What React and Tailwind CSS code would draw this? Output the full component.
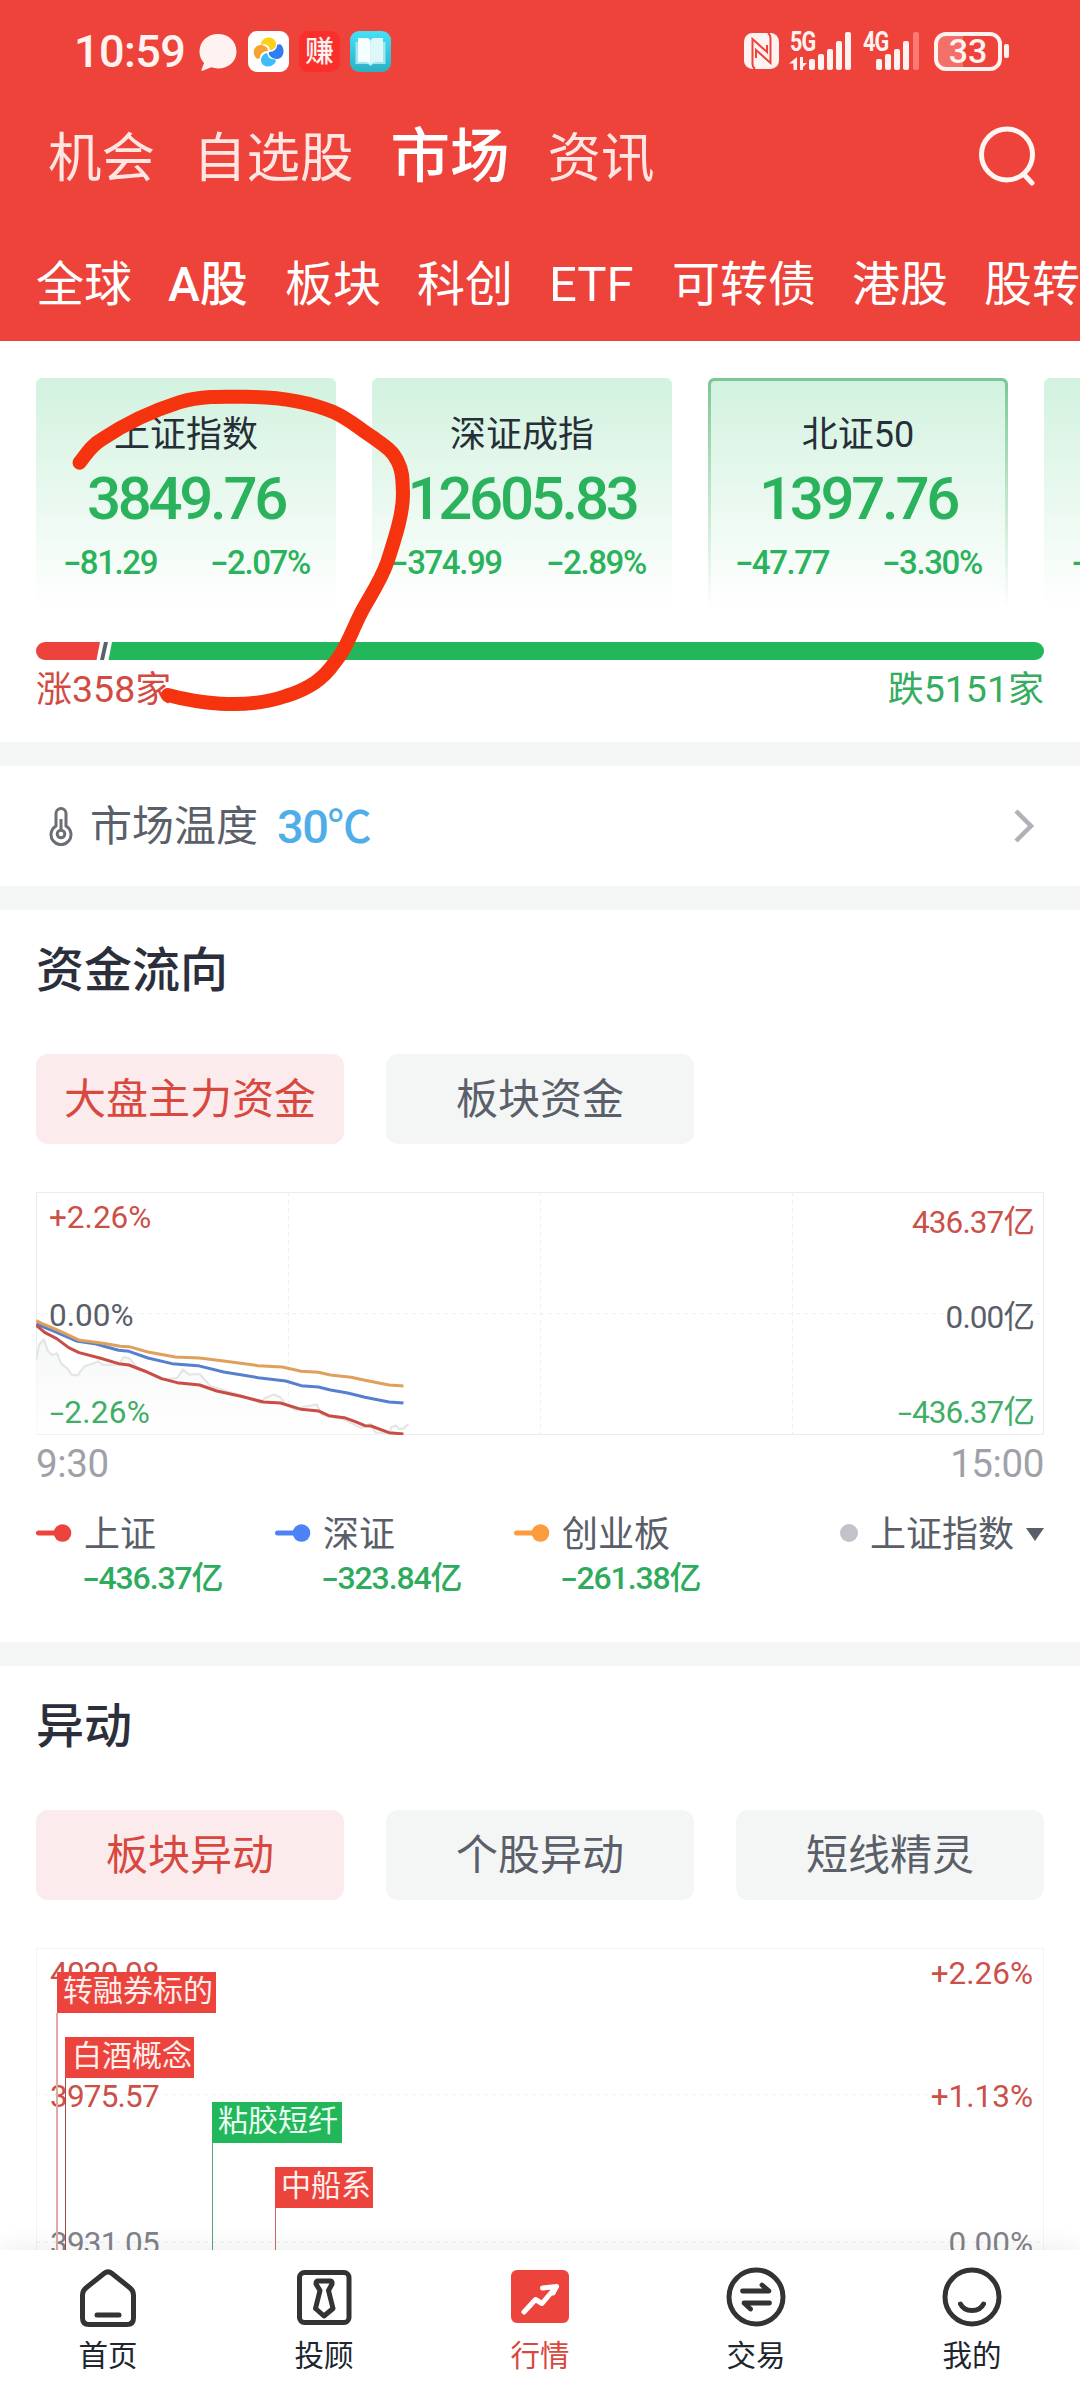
import React from "react";

const CARDS = [
  { name: "上证指数", value: "3849.76", diff: "-81.29", pct: "-2.07%" },
  { name: "深证成指", value: "12605.83", diff: "-374.99", pct: "-2.89%" },
  { name: "北证50", value: "1397.76", diff: "-47.77", pct: "-3.30%", active: true },
  { name: "\u00a0", value: "\u00a0", diff: "-34.52", pct: "\u00a0" },
];

// Number whose leading minus is drawn wide, level with the digits.
function Signed({ children }) {
  const text = String(children);
  if (text[0] !== "-") return <span>{text}</span>;
  return (
    <span className="whitespace-nowrap">
      <span className="inline-block w-[0.45em] scale-x-[1.6] text-center tracking-normal">-</span>
      {text.slice(1)}
    </span>
  );
}

function StatusBar() {
  return (
    <div className="flex h-[102px] items-center pl-[74px] pr-[71px] text-[#fff3f1]">
      <span className="w-[123px] text-[45px] font-medium leading-none tracking-[-0.6px]">10:59</span>
      <svg className="mt-px h-[42px] w-[42px]" viewBox="0 0 42 42" fill="none">
        <path d="M21 3C10.500 3 2.500 10.500 2.500 20.500c0 5 1.800 8.600 4.600 11.400L4.500 38.500c-.3 1 .4 1.600 1.300 1.200l8.400-3.400c2.100.7 4.400 1.100 6.800 1.100 10.500 0 18.500-7 18.500-17S31.500 3 21 3z" fill="#fff3f1" />
      </svg>
      <svg className="ml-[9px] h-[41px] w-[41px]" viewBox="0 0 41 41">
        <rect width="41" height="41" rx="9" fill="#fff" />
        <path d="M14 10c4-6 14-4 14 3 0 4-3 6-6 6-1-5-4-7-9-5 0-2 0-3 1-4z" fill="#fcd116" />
        <path d="M34 15c4 6 0 14-6 13-5-1-8-4-7-7 5 0 8-3 8-7 2-1 4-1 5 1z" fill="#2f7df0" />
        <path d="M27 32c-5 6-14 4-14-3 0-3 2-6 6-7 1 5 4 7 8 6 1 1 1 3 0 4z" fill="#3cbcf8" />
        <path d="M8 27c-5-6-1-14 6-13 4 1 6 3 6 6-5 0-8 3-8 7-1 1-3 1-4 0z" fill="#f7a233" />
      </svg>
      <div className="ml-[10px] flex h-[41px] w-[41px] items-center justify-center rounded-[9px] bg-[#f92f2b] pt-[3px] text-[29px] font-medium leading-none text-[#fff3f1]">
        赚
      </div>
      <svg className="ml-[10px] h-[41px] w-[41px]" viewBox="0 0 41 41">
        <defs>
          <linearGradient id="book" x1="0" y1="0" x2="0" y2="1">
            <stop offset="0" stopColor="#45e0f8" />
            <stop offset="1" stopColor="#2cb0c4" />
          </linearGradient>
        </defs>
        <rect width="41" height="41" rx="9" fill="url(#book)" />
        <path d="M5.500 11v22H18l2.500 2 2.500-2h12.500V11z" fill="#9fe6ee" />
        <path d="M8 7h9c2 0 3.500 1.500 3.500 3.500V34c-1-2-3-3-5-3H8z" fill="#f4ffff" />
        <path d="M33 7h-9c-2 0-3.500 1.500-3.500 3.500V34c1-2 3-3 5-3H33z" fill="#e0f7fa" />
      </svg>
      <div className="ml-auto flex items-center">
        <svg className="h-[36px] w-[35px]" viewBox="0 0 35 36">
          <rect width="35" height="36" rx="8.500" fill="#fff3f1" />
          <path d="M11 36C9 34.500 8.500 33 8.500 31V6L23 19V12" fill="none" stroke="#ee433b" strokeWidth="2" />
          <path d="M24 0C26 1.500 26.500 3 26.500 5V30L12 17V25" fill="none" stroke="#ee433b" strokeWidth="2" />
        </svg>
        <div className="relative ml-[11px] h-[38px] w-[62px]">
          <span className="absolute left-0 top-[-3px] origin-left scale-x-[0.8] text-[27px] font-bold leading-none tracking-[-1px]">5G</span>
          <svg className="absolute inset-0 h-[38px] w-[62px] overflow-visible" viewBox="0 0 62 38" fill="#fff3f1">
            <path d="M7 25v13H3.500v-6.500H-1zM10 25v13h3v-3l4-4h-4v-6z" />
            <rect x="19" y="27" width="6" height="11" rx="2" />
            <rect x="28" y="22" width="6" height="16" rx="2" />
            <rect x="37" y="17" width="6" height="21" rx="2" />
            <rect x="46" y="9" width="6" height="29" rx="2" />
            <rect x="55" y="0" width="6" height="38" rx="2" />
          </svg>
        </div>
        <div className="relative ml-[11px] h-[38px] w-[57px]">
          <span className="absolute left-0 top-[-3px] origin-left scale-x-[0.8] text-[27px] font-bold leading-none tracking-[-1px]">4G</span>
          <svg className="absolute inset-0 h-[38px] w-[57px]" viewBox="0 0 57 38" fill="#fff3f1">
            <rect x="13" y="27" width="6" height="11" rx="2" />
            <rect x="22" y="22" width="6" height="16" rx="2" />
            <rect x="31" y="17" width="6" height="21" rx="2" />
            <rect x="40" y="9" width="6" height="29" rx="2" />
            <rect x="50" y="0" width="6" height="38" rx="2" fill="#fb7a72" />
          </svg>
        </div>
        <div className="ml-[14px] flex h-[39px] w-[68px] items-center justify-center rounded-[12px] border-[4px] border-[#fff3f1] bg-[linear-gradient(90deg,#f37068_42%,transparent_42%)] text-[34px] font-medium leading-none">
          33
        </div>
        <div className="ml-[2px] h-[14px] w-[5px] rounded-[2px] bg-[#fff3f1]" />
      </div>
    </div>
  );
}

function Header() {
  return (
    <header className="h-[341px] shrink-0 bg-[#ed433a] text-white">
      <StatusBar />
      <div className="flex h-[106px] items-center pl-[48px] pr-[44px] text-[53.500px] leading-none text-[#ffe6e3]">
        <span className="pt-[7px]">机会</span>
        <span className="ml-[38px] pt-[7px]">自选股</span>
        <span className="ml-[37px] pt-[5px] text-[59.500px] font-medium text-white">市场</span>
        <span className="ml-[38px] pt-[7px]">资讯</span>
        <svg className="ml-auto h-[62px] w-[60px]" viewBox="0 0 60 62" fill="none" stroke="#fff5f3" strokeWidth="5" strokeLinecap="round">
          <circle cx="31" cy="30.500" r="25.500" />
          <path d="M48 50.500l8 8.500" />
        </svg>
      </div>
      <div className="flex h-[133px] items-center overflow-hidden whitespace-nowrap pl-[36px] pt-[20px] text-[48px] leading-none">
        <span className="w-[132px]">全球</span>
        <span className="w-[117px] font-medium">A股</span>
        <span className="w-[132px]">板块</span>
        <span className="w-[131px]">科创</span>
        <span className="w-[124px] pl-px text-[49px]">ETF</span>
        <span className="w-[180px]">可转债</span>
        <span className="w-[132px]">港股</span>
        <span className="w-[96px]">股转</span>
      </div>
    </header>
  );
}

function IndexCard({ name, value, diff, pct, active }) {
  return (
    <div className="relative h-[231px] w-[300px] shrink-0">
      {active && (
        <div className="absolute inset-0 rounded-t-[6px] bg-linear-to-b from-[#79c795] to-white" />
      )}
      <div
        className={
          "absolute bg-linear-to-b from-[#d2f2df] to-white " +
          (active ? "inset-x-[3px] bottom-0 top-[3px] rounded-t-[4px]" : "inset-0 rounded-t-[6px]")
        }
      />
      <div className="relative flex h-full flex-col items-center leading-none text-[#2bb25c]">
        <span className="mt-[39px] text-[36px] text-[#262f38]">{name}</span>
        <span className="mt-[16px] text-[60px] font-medium tracking-[-3.300px]">{value}</span>
        <div className="mt-[17px] grid w-full grid-cols-2 text-center text-[33px] font-medium tracking-[-1.400px]">
          <Signed>{diff}</Signed>
          <Signed>{pct}</Signed>
        </div>
      </div>
    </div>
  );
}

function Scribble() {
  return (
    <svg className="pointer-events-none absolute left-0 top-[4px] h-[400px] w-[540px]" viewBox="0 0 1568 1200" preserveAspectRatio="none" fill="none">
      <path
        d="M231 353C250 330 262 302 300 280C380 225 450 195 520 172C590 150 660 155 740 156C830 158 900 172 970 202C1020 225 1040 250 1080 275C1110 298 1140 315 1155 350C1172 385 1168 410 1170 440C1172 500 1150 570 1125 650C1105 710 1070 760 1050 800C1020 860 1005 915 970 955C940 1000 900 1030 830 1053C760 1078 700 1080 640 1076C580 1072 530 1062 487 1050"
        stroke="#f5330f"
        strokeWidth="14"
        strokeLinecap="round"
        vectorEffect="non-scaling-stroke"
      />
    </svg>
  );
}

function Indices() {
  return (
    <section className="relative h-[401px] shrink-0 overflow-hidden bg-white pt-[37px]">
      <div className="flex gap-[36px] pl-[36px]">
        {CARDS.map((c) => (
          <IndexCard key={c.diff} {...c} />
        ))}
      </div>
      <svg className="ml-[36px] mt-[33px] h-[18px] w-[1008px]" viewBox="0 0 1008 18">
        <path d="M9 0H64L60.500 18H9A9 9 0 0 1 9 0z" fill="#ec443d" />
        <path d="M68 0H72L68 18H64z" fill="#5b606a" />
        <path d="M76 0H999A9 9 0 0 1 999 18H72.500z" fill="#22b75a" />
      </svg>
      <div className="mt-[11px] flex justify-between px-[36px] text-[36px] leading-none">
        <span className="text-[#d24a41]">
          涨<span className="text-[37.500px]">358</span>家
        </span>
        <span className="text-[#35ad60]">
          跌<span className="text-[37.500px]">5151</span>家
        </span>
      </div>
      <Scribble />
    </section>
  );
}

function Temperature() {
  return (
    <section className="flex h-[120px] shrink-0 items-center bg-white pl-[49px] pr-[44px] leading-none">
      <svg className="h-[40px] w-[24px]" viewBox="0 0 24 40" fill="none" stroke="#6b6e75" strokeWidth="3">
        <path d="M7 20V7.500a5 5 0 0 1 10 0V20a10 10 0 1 1-10 0z" />
        <circle cx="12" cy="28" r="3.800" />
        <path d="M12 13v11" />
      </svg>
      <span className="ml-[17px] pt-[2px] text-[42px] text-[#5a5f69]">市场温度</span>
      <span className="ml-[19px] text-[47px] font-medium tracking-[-1.500px] text-[#4faee8]">
        30<span className="font-['Noto_Sans_CJK_SC'] text-[44px]">℃</span>
      </span>
      <svg className="ml-auto h-[36px] w-[24px]" viewBox="0 0 24 36" fill="none" stroke="#b0b2b7" strokeWidth="4.500">
        <path d="M4 3L19 18 4 33" />
      </svg>
    </section>
  );
}

function Tabs({ items }) {
  return (
    <div className="grid grid-cols-3 gap-x-[42px] px-[36px] text-[42px] leading-none">
      {items.map((t, i) => (
        <div
          key={t}
          className={
            "flex h-[90px] items-center justify-center rounded-[12px] pt-px " +
            (i === 0 ? "bg-[#fbebec] text-[#d8483e]" : "bg-[#f4f6f5] text-[#5a5f69]")
          }
        >
          {t}
        </div>
      ))}
    </div>
  );
}

function FlowChart() {
  return (
    <div className="relative mx-[36px] h-[243px] w-[1008px]">
      <svg className="absolute inset-0 h-[243px] w-[1008px]" viewBox="0 0 1008 243" fill="none">
        <defs>
          <linearGradient id="area" x1="0" y1="0" x2="0" y2="1">
            <stop offset="0" stopColor="#f6f7f7" />
            <stop offset="1" stopColor="#ffffff" />
          </linearGradient>
        </defs>
        <rect x=".5" y=".5" width="1007" height="242" stroke="#ebecec" />
        <g stroke="#eeefef" strokeDasharray="4 4">
          <path d="M252.500 0V243M504.500 0V243M756.500 0V243M0 121.500H1008" />
        </g>
        <g transform="scale(.3444 .3333) translate(-105 -67)" strokeLinejoin="round">
          <path d="M106 570L114 525 128 509 140 545 152 556 166 551 178 582 196 597 208 615 226 617 245 590 270 582 285 575 300 586 345 584 360 562 376 566 400 595 470 630 515 625 532 600 550 615 580 613 612 650 700 677 757 700 770 685 795 675 815 683 830 705 860 722 880 712 920 705 935 735 1000 750 1050 775 1075 762 1090 788 1130 790V794H106z" fill="url(#area)" />
          <path d="M106 570L114 525 128 509 140 545 152 556 166 551 178 582 196 597 208 615 226 617 245 590 270 582 285 575 300 586 345 584 360 562 376 566 400 595 470 630 515 625 532 600 550 615 580 613 612 650 700 677 757 700 770 685 795 675 815 683 830 705 860 722 880 712 920 705 935 735 1000 750 1050 775 1075 762 1090 788 1130 790 1137 773 1150 768 1160 778 1172 777 1186 763" stroke="#e3e5e6" strokeWidth="2.200" vectorEffect="non-scaling-stroke" />
          <path d="M106 463L165 488 222 514 275 522 310 532 345 542 375 545 430 565 500 582 575 588 650 607 750 624 830 634 875 648 925 652 960 661 1010 670 1060 683 1130 697 1172 700" stroke="#567fd0" strokeWidth="3" vectorEffect="non-scaling-stroke" />
          <path d="M106 453L125 463 165 480 232 512 300 521 350 530 375 531 430 547 510 562 580 565 650 574 750 588 820 592 875 605 925 608 960 616 1020 623 1060 632 1130 646 1172 649" stroke="#dea05a" strokeWidth="3" vectorEffect="non-scaling-stroke" />
          <path d="M106 467L130 488 165 507 200 534 230 549 290 565 345 582 375 586 420 604 470 627 515 639 580 646 630 664 700 680 765 697 815 700 875 719 925 724 955 738 1000 744 1030 755 1060 768 1078 769 1130 789 1172 793" stroke="#c94d44" strokeWidth="3" vectorEffect="non-scaling-stroke" />
        </g>
      </svg>
      <div className="relative flex h-full justify-between pl-[13px] pr-[10px] text-[31.500px] leading-none">
        <div className="flex flex-col">
          <span className="mt-[10px] text-[#cb5048]">+2.26%</span>
          <span className="mt-[66px] text-[#595e68]">0.00%</span>
          <span className="mt-[66px] pl-px tracking-[0.3px] text-[#3fae66]">
            <Signed>-2.26%</Signed>
          </span>
        </div>
        <div className="flex flex-col items-end tracking-[-0.900px]">
          <span className="mt-[15px] text-[#cb5048]">436.37亿</span>
          <span className="mt-[63px] text-[#595e68]">0.00亿</span>
          <span className="mt-[64px] text-[#3fae66]">
            <Signed>-436.37亿</Signed>
          </span>
        </div>
      </div>
    </div>
  );
}

const LEGEND = [
  { name: "上证", value: "-436.37亿", color: "#ec443d" },
  { name: "深证", value: "-323.84亿", color: "#4d82f5" },
  { name: "创业板", value: "-261.38亿", color: "#fd9b3f" },
];

function Legend() {
  return (
    <div className="mt-[33px] flex px-[36px] leading-none">
      {LEGEND.map((l) => (
        <div key={l.name} className="flex w-[239px] gap-[12px]">
          <svg className="mt-[7px] h-[18px] w-[36px] shrink-0" viewBox="0 0 36 18" fill={l.color}>
            <rect y="6.500" width="24" height="5" rx="2.500" />
            <circle cx="26.500" cy="9" r="8.800" />
          </svg>
          <div className="flex flex-col">
            <span className="text-[36px] text-[#595e68]">{l.name}</span>
            <span className="mt-[9px] whitespace-nowrap text-[32px] font-medium tracking-[-1.100px] text-[#2fab5e]">
              <Signed>{l.value}</Signed>
            </span>
          </div>
        </div>
      ))}
      <div className="ml-auto flex h-[36px] items-center">
        <div className="mb-[3px] h-[18px] w-[18px] rounded-full bg-[#c2c3ca]" />
        <span className="ml-[12px] text-[36px] text-[#595e68]">上证指数</span>
        <svg className="ml-[12px] h-[13px] w-[18px]" viewBox="0 0 18 13">
          <path d="M0 0H18L9 13z" fill="#595e68" />
        </svg>
      </div>
    </div>
  );
}

function MoneyFlow() {
  return (
    <section className="h-[732px] shrink-0 bg-white pt-[37px]">
      <h2 className="pl-[36px] text-[48px] font-medium leading-none text-[#2b2f3b]">资金流向</h2>
      <div className="mt-[59px]">
        <Tabs items={["大盘主力资金", "板块资金"]} />
      </div>
      <div className="mt-[48px]">
        <FlowChart />
      </div>
      <div className="mt-[10px] flex justify-between px-[36px] text-[38.500px] leading-none tracking-[-0.400px] text-[#a0a1a8]">
        <span>9:30</span>
        <span>15:00</span>
      </div>
      <Legend />
    </section>
  );
}

function Movement() {
  return (
    <section className="h-[584px] shrink-0 overflow-hidden bg-white pt-[37px]">
      <h2 className="pl-[36px] text-[48px] font-medium leading-none text-[#2b2f3b]">异动</h2>
      <div className="mt-[59px]">
        <Tabs items={["板块异动", "个股异动", "短线精灵"]} />
      </div>
      <div className="relative mx-[36px] mt-[48px] h-[400px] w-[1008px] text-[31.500px] leading-none">
        <svg className="absolute inset-0 h-[400px] w-[1008px]" viewBox="0 0 1008 400" fill="none">
          <rect x=".5" y=".5" width="1007" height="399" stroke="#f3f4f4" />
          <path d="M0 146.500H1008M0 294H1008" stroke="#f2f3f3" strokeWidth="1.500" strokeDasharray="4 4" />
        </svg>
        <div className="relative flex justify-between pl-[14px] pr-[11px]">
          <div className="flex flex-col tracking-[-0.800px]">
            <span className="mt-[10px] text-[#cb5048]">4020.08</span>
            <span className="mt-[91px] text-[#cb5048]">3975.57</span>
            <span className="mt-[116px] text-[#80838a]">3931.05</span>
          </div>
          <div className="flex flex-col items-end">
            <span className="mt-[10px] text-[#cb5048]">+2.26%</span>
            <span className="mt-[91px] text-[#cb5048]">+1.13%</span>
            <span className="mt-[116px] text-[#80838a]">0.00%</span>
          </div>
        </div>
        <svg className="absolute inset-0 h-[400px] w-[1008px]" viewBox="0 0 1008 400">
          <rect x="20" y="65" width="2" height="335" fill="#e2aaa5" />
          <rect x="29" y="130" width="1" height="270" fill="#a9483f" />
          <rect x="176" y="195" width="1" height="205" fill="#55a673" />
          <rect x="239" y="260" width="1" height="140" fill="#cb6a63" />
        </svg>
        <div className="absolute left-[21px] top-[24px] flex h-[41px] w-[159px] items-center bg-[#ec443d] pb-[4px] pl-[6px] text-[30px] text-[#fff0ee]">转融券标的</div>
        <div className="absolute left-[29px] top-[89px] flex h-[41px] w-[129px] items-center bg-[#ec443d] pb-[4px] pl-[7px] text-[30px] text-[#fff0ee]">白酒概念</div>
        <div className="absolute left-[176px] top-[154px] flex h-[41px] w-[130px] items-center bg-[#22b75a] pb-[4px] pl-[6px] text-[30px] text-[#eafff2]">粘胶短纤</div>
        <div className="absolute left-[239px] top-[219px] flex h-[41px] w-[98px] items-center bg-[#ec443d] pb-[4px] pl-[6px] text-[30px] text-[#fff0ee]">中船系</div>
      </div>
    </section>
  );
}

const NAV = [
  {
    name: "首页",
    icon: (
      <>
        <path d="M26 7.500L8.500 21.500Q4.500 24.500 4.500 29V52Q4.500 58.500 11 58.500H49Q55.500 58.500 55.500 52V29Q55.500 24.500 51.500 21.500L34 7.500Q30 4.200 26 7.500z" />
        <path d="M19 49H41" />
      </>
    ),
  },
  {
    name: "投顾",
    icon: (
      <>
        <rect x="5.500" y="6.500" width="49.500" height="50" rx="5" />
        <path d="M24 15H36.500Q38.500 15 38 18L34.500 24.500 39 42.500 30 50 21.500 42.500 26 24.500 22 18Q22 15 24 15z" />
      </>
    ),
  },
  {
    name: "行情",
    icon: (
      <>
        <rect x="1" y="4" width="58" height="53" rx="6" fill="#ec443d" stroke="none" />
        <path d="M14 46L25.500 33.500 32 37.500 46.500 20.500M32.500 22L46.500 20.500L43 27" stroke="#fff" />
      </>
    ),
    active: true,
  },
  {
    name: "交易",
    icon: (
      <>
        <circle cx="30" cy="31" r="27" />
        <path d="M16.500 25H43L36 19M43.500 37H18L24.500 43" strokeWidth="4.800" />
      </>
    ),
  },
  {
    name: "我的",
    icon: (
      <>
        <circle cx="30" cy="31" r="27" />
        <path d="M18.500 38a12.300 10 0 0 0 23 0" />
      </>
    ),
  },
];

function BottomNav() {
  return (
    <nav className="relative h-[150px] shrink-0 bg-white shadow-[0_-4px_22px_rgba(0,0,0,0.07)]">
      <div className="grid grid-cols-5">
        {NAV.map((n) => (
          <div key={n.name} className="flex flex-col items-center pt-[16px]">
            <svg className="h-[62px] w-[60px]" viewBox="0 0 60 62" fill="none" stroke="#333333" strokeWidth="5" strokeLinecap="round" strokeLinejoin="round">
              {n.icon}
            </svg>
            <span className={"mt-[14px] text-[29.500px] leading-none " + (n.active ? "text-[#d8483e]" : "text-[#20252e]")}>{n.name}</span>
          </div>
        ))}
      </div>
    </nav>
  );
}

export default function App() {
  return (
    <div className="flex h-[2400px] w-[1080px] flex-col overflow-hidden bg-[#f4f6f5] font-['Roboto','Noto_Sans_CJK_SC',sans-serif]">
      <Header />
      <Indices />
      <div className="h-[24px] shrink-0" />
      <Temperature />
      <div className="h-[24px] shrink-0" />
      <MoneyFlow />
      <div className="h-[24px] shrink-0" />
      <Movement />
      <BottomNav />
    </div>
  );
}
